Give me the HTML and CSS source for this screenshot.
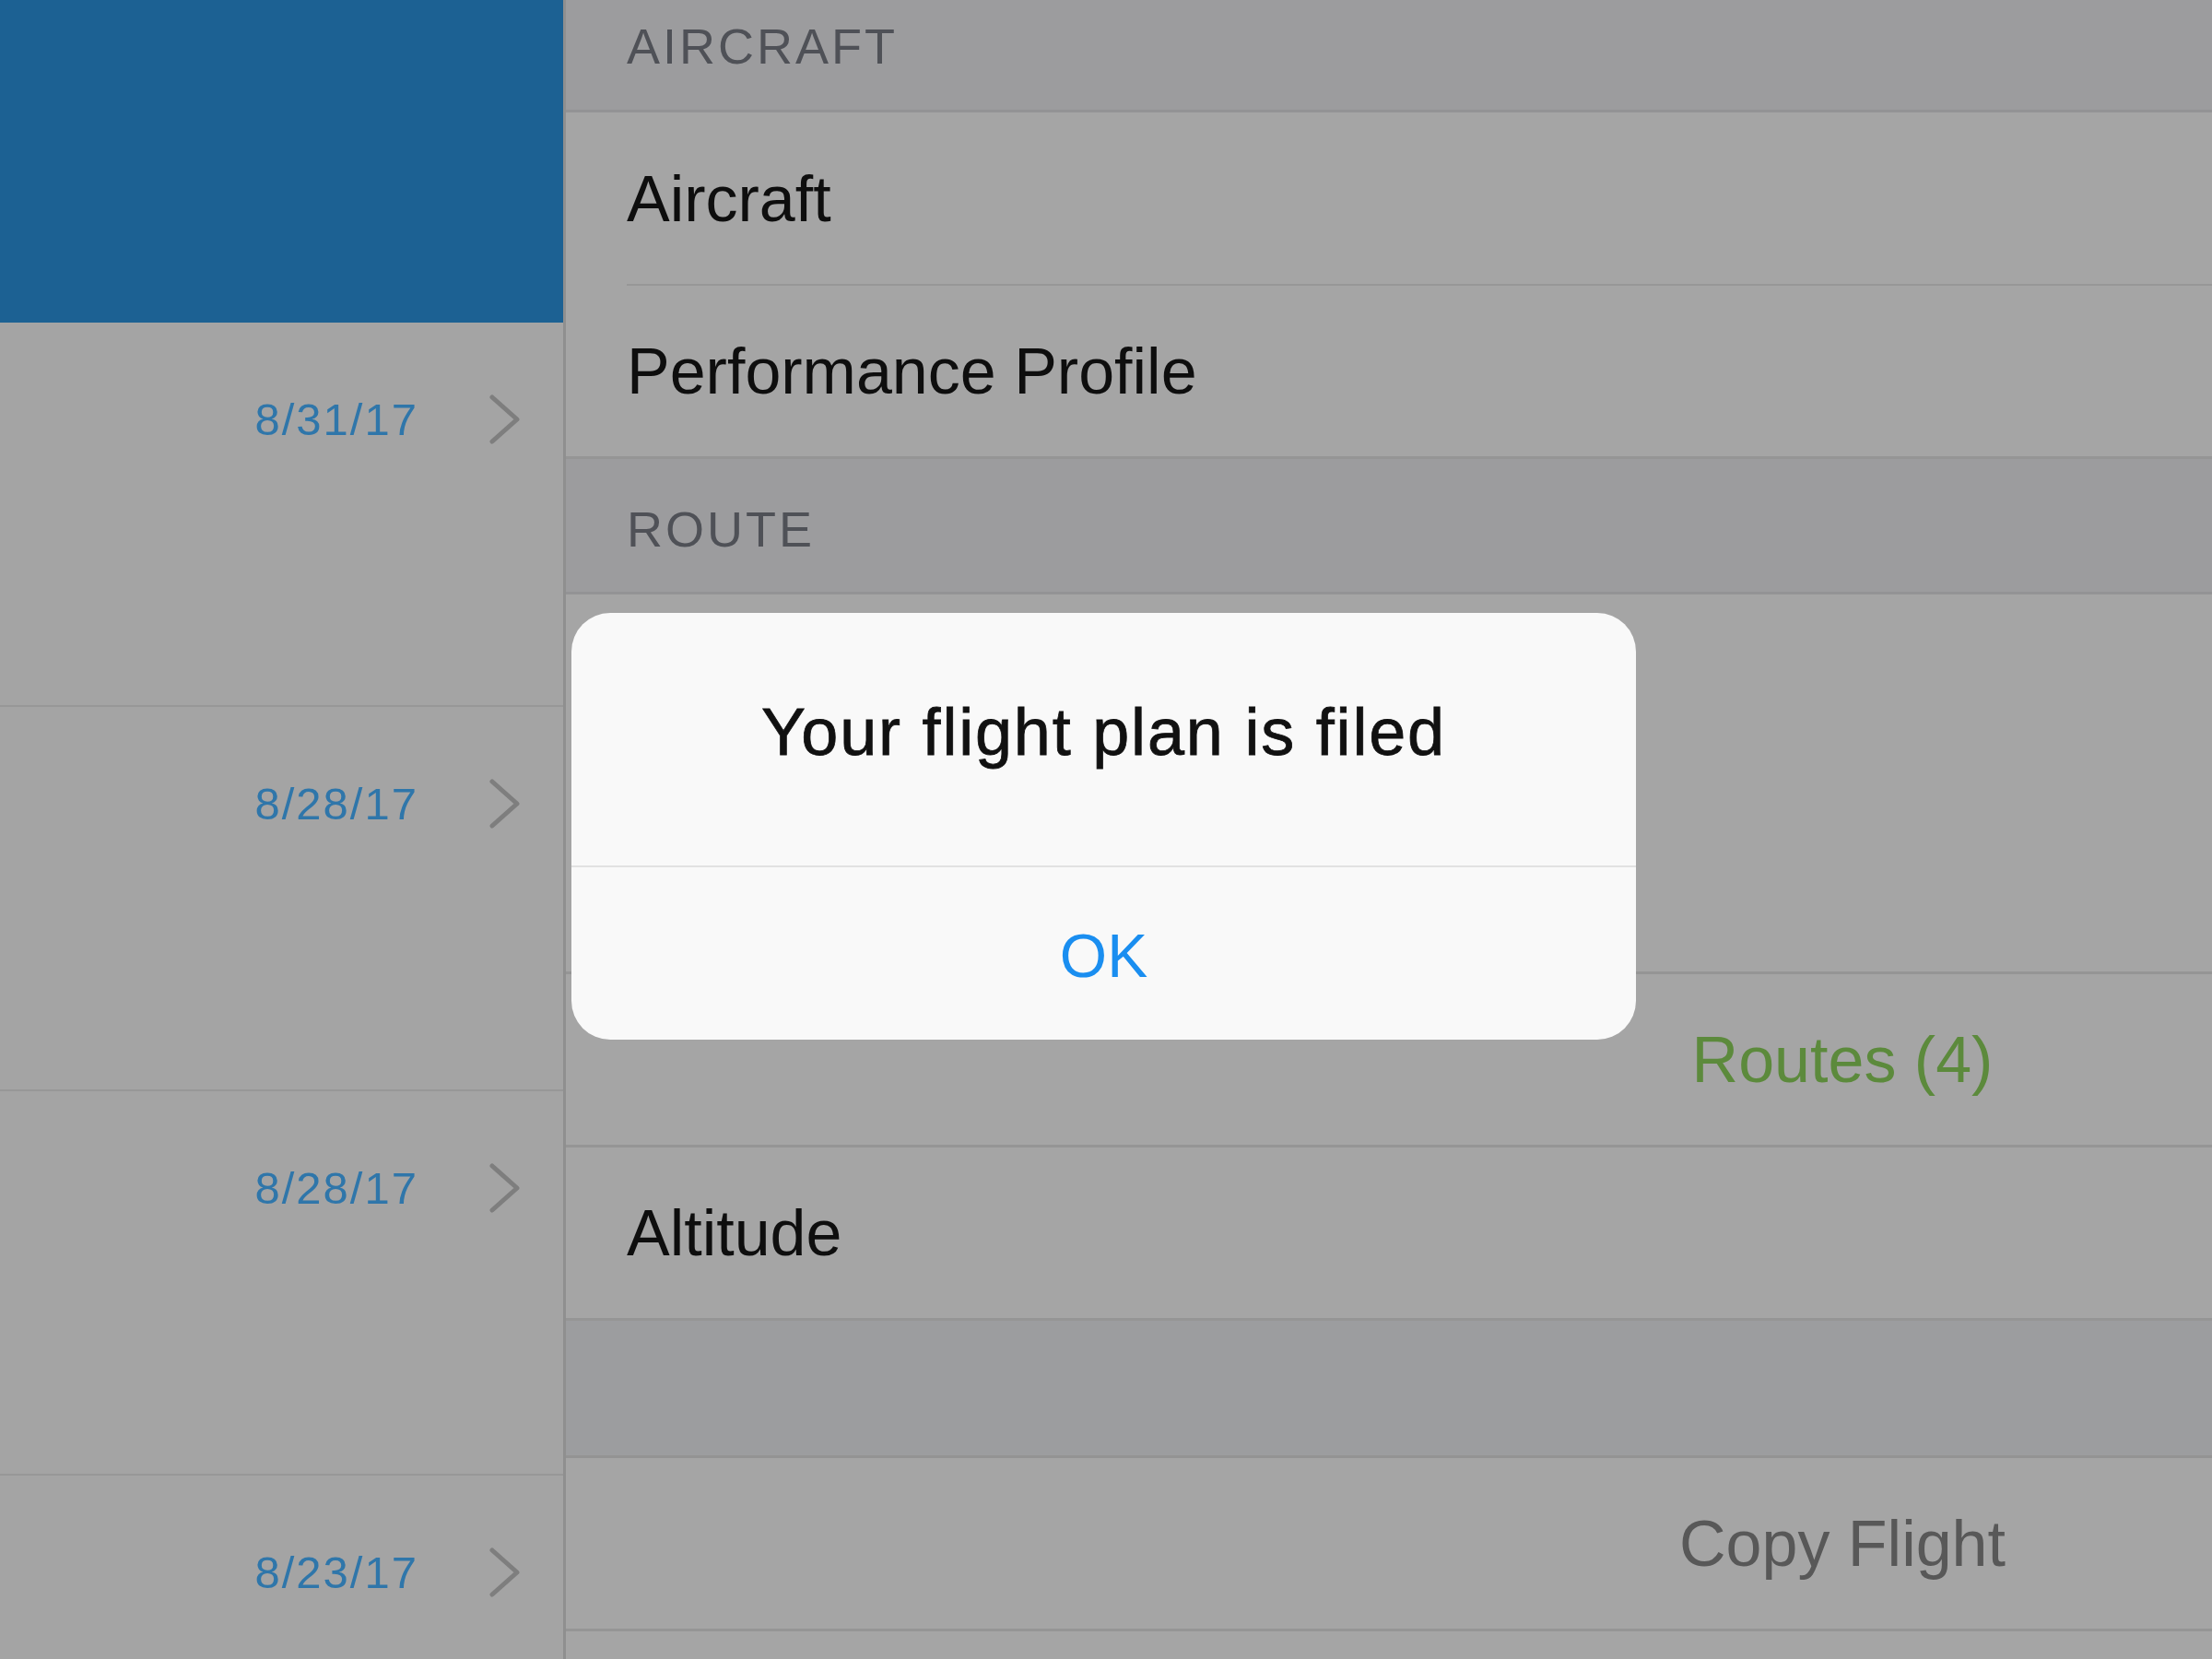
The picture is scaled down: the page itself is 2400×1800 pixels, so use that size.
FILE: index.html
```html
<!DOCTYPE html>
<html lang="en">
<head>
<meta charset="utf-8">
<title>Flight plan filed</title>
<link rel="stylesheet" href="styles.css">
</head>
<body>
<div class="app">
  <aside class="sidebar">
    <div class="sidebar-head"></div>
    <div class="flight-row">
      <span class="flight-date">8/31/17</span>
      <svg class="chev" width="34" height="54" viewBox="0 0 34 54"><polyline points="3,3 30,27 3,51" fill="none" stroke="#7e7e7e" stroke-width="5" stroke-linecap="round" stroke-linejoin="round"/></svg>
    </div>
    <div class="flight-row">
      <span class="flight-date">8/28/17</span>
      <svg class="chev" width="34" height="54" viewBox="0 0 34 54"><polyline points="3,3 30,27 3,51" fill="none" stroke="#7e7e7e" stroke-width="5" stroke-linecap="round" stroke-linejoin="round"/></svg>
    </div>
    <div class="flight-row">
      <span class="flight-date">8/28/17</span>
      <svg class="chev" width="34" height="54" viewBox="0 0 34 54"><polyline points="3,3 30,27 3,51" fill="none" stroke="#7e7e7e" stroke-width="5" stroke-linecap="round" stroke-linejoin="round"/></svg>
    </div>
    <div class="flight-row last">
      <span class="flight-date">8/23/17</span>
      <svg class="chev" width="34" height="54" viewBox="0 0 34 54"><polyline points="3,3 30,27 3,51" fill="none" stroke="#7e7e7e" stroke-width="5" stroke-linecap="round" stroke-linejoin="round"/></svg>
    </div>
  </aside>
  <main class="detail">
    <div class="section-head first"><span>AIRCRAFT</span></div>
    <div class="cell inset"><span class="cell-label">Aircraft</span></div>
    <div class="cell"><span class="cell-label">Performance Profile</span></div>
    <div class="section-head"><span>ROUTE</span></div>
    <div class="cell tall"></div>
    <div class="cell action"><span class="action-text green">Routes (4)</span></div>
    <div class="cell"><span class="cell-label">Altitude</span></div>
    <div class="section-gap"></div>
    <div class="cell action"><span class="action-text grey">Copy Flight</span></div>
  </main>
</div>
<div class="alert" role="alertdialog">
  <div class="alert-title">Your flight plan is filed</div>
  <div class="alert-button">OK</div>
</div>
</body>
</html>
```

FILE: styles.css
```css
html, body {
  margin: 0;
  padding: 0;
}
body {
  width: 2400px;
  height: 1800px;
  overflow: hidden;
  background: #a5a5a5;
  font-family: "Liberation Sans", Arial, sans-serif;
  color: #111;
}
.app {
  display: flex;
  height: 1800px;
  overflow: hidden;
}
.sidebar {
  width: 611px;
  flex: none;
  background: #a4a4a4;
  border-right: 3px solid #8f8f8f;
  display: flex;
  flex-direction: column;
  overflow: hidden;
}
.sidebar-head {
  height: 350px;
  background: #1c6193;
  flex: none;
}
.flight-row {
  height: 417px;
  flex: none;
  box-sizing: border-box;
  border-bottom: 2px solid #979797;
  display: flex;
  align-items: flex-start;
  justify-content: flex-end;
  gap: 77px;
  padding: 78px 46px 0 0;
}
.flight-row.last {
  flex: 1 1 auto;
  height: auto;
  min-height: 0;
  border-bottom: none;
}
.flight-date {
  font-size: 49px;
  line-height: 54px;
  color: #2f76aa;
  letter-spacing: 2px;
}
.chev {
  display: block;
}
.detail {
  flex: 1;
  min-width: 0;
  display: flex;
  flex-direction: column;
  margin-top: -26px;
}
.section-head {
  height: 147px;
  flex: none;
  box-sizing: border-box;
  background: #9c9c9e;
  border-bottom: 3px solid #939395;
  padding: 44px 0 0 66px;
  font-size: 54px;
  line-height: 64px;
  letter-spacing: 3px;
  color: #4f5157;
}
.section-head.first {
  height: 148px;
}
.cell {
  height: 188px;
  flex: none;
  box-sizing: border-box;
  background: #a5a5a5;
  border-bottom: 3px solid #959595;
  display: flex;
  align-items: center;
  padding-left: 66px;
}
.cell.inset {
  border-bottom: none;
  background-image: linear-gradient(#979797, #979797);
  background-size: calc(100% - 66px) 2px;
  background-position: 66px 100%;
  background-repeat: no-repeat;
}
.cell.tall {
  height: 412px;
}
.cell-label {
  font-size: 70px;
  color: #0e0e0e;
}
.cell.action {
  padding-left: 1035px;
}
.action-text {
  font-size: 70px;
  width: 700px;
  text-align: center;
}
.action-text.green {
  color: #5c8a3c;
}
.action-text.grey {
  color: #585858;
}
.section-gap {
  height: 149px;
  flex: none;
  box-sizing: border-box;
  background: #9c9d9f;
  border-bottom: 3px solid #939393;
}
.alert {
  position: fixed;
  left: 620px;
  top: 665px;
  width: 1155px;
  height: 463px;
  border-radius: 42px;
  background: #f9f9f9;
  display: flex;
  flex-direction: column;
}
.alert-title {
  height: 276px;
  box-sizing: border-box;
  border-bottom: 2px solid #e2e2e2;
  display: flex;
  align-items: center;
  justify-content: center;
  font-size: 72px;
  letter-spacing: 1.8px;
  -webkit-text-stroke: 0.8px #111;
  color: #111;
  padding-bottom: 16px;
}
.alert-button {
  flex: 1;
  display: flex;
  align-items: center;
  justify-content: center;
  font-size: 66px;
  color: #1a8ef0;
  padding-top: 4px;
}
```
